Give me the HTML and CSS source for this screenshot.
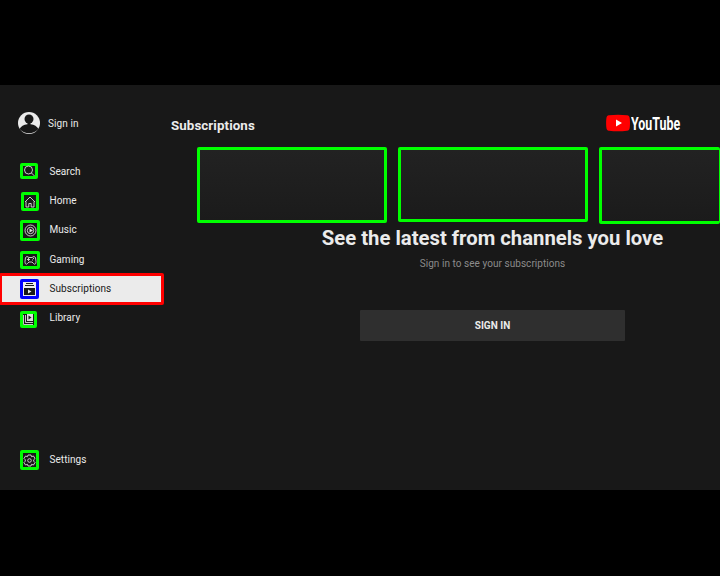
FILE: index.html
```html
<!DOCTYPE html>
<html lang="en">
<head>
<meta charset="utf-8">
<title>Subscriptions</title>
<link rel="stylesheet" href="styles.css">
</head>
<body>
<div class="app">
  <aside class="sidebar">
    <div class="account">
      <svg class="avatar" viewBox="0 0 22 22"><circle cx="11" cy="11" r="11" fill="#ebebeb"/><circle cx="11" cy="7" r="4.500" fill="#181818"/><path d="M9.500 10h3v2.300c4 .2 6.500 2.500 8 4.700C17.500 20 14.500 21.300 11 21.300S4.500 20 1.500 17c1.500-2.200 4-4.500 8-4.700z" fill="#181818"/></svg>
      <span>Sign in</span>
    </div>
    <nav class="nav">
      <div class="item"><span class="mark search"><svg width="12" height="12" viewBox="0 0 12 12"><circle cx="5.500" cy="5" r="4"/><path d="M8.500 8l3 3"/></svg></span><span>Search</span></div>
      <div class="item"><span class="mark home"><svg width="12" height="12" viewBox="0 0 12 12"><path d="M1 6l5-5 5 5M2 5.500V11h2.800V7.500h2.400V11H10V5.500"/></svg></span><span>Home</span></div>
      <div class="item tall"><span class="mark music"><svg width="13" height="13" viewBox="0 0 13 13"><circle cx="6.500" cy="6.500" r="5.500"/><circle cx="6.500" cy="6.500" r="3.200"/><path class="solid" d="M5.500 4.500L9 6.500l-3.500 2z"/></svg></span><span>Music</span></div>
      <div class="item"><span class="mark gaming"><svg width="13" height="11" viewBox="0 0 13 11"><path d="M3 1.500l2 1h3l2-1 1.500 1 .5 4c0 3-1.500 3.500-3 1.500L8 7H5L4 8C2.500 10 1 9.500 1 6.500l.5-4zM3 4.500h3M4.500 3v3M8 5h1M9 3.500h1"/></svg></span><span>Gaming</span></div>
      <div class="item active"><span class="mark subs"><svg width="13" height="14" viewBox="0 0 13 14"><path class="solid" d="M3 1h7v1H3zM2 3h9v1H2zM1 6h11v7H1z"/><path fill="#ebebeb" stroke="none" d="M5 7.500l3.500 2-3.500 2z"/></svg></span><span>Subscriptions</span></div>
      <div class="item tall"><span class="mark library"><svg width="11" height="11" viewBox="0 0 11 11"><path d="M.5 1v9.500H10M2.500 1v7.500H10"/><path class="solid" d="M4 0h6v7H4z"/><path fill="#181818" stroke="none" d="M5.500 1.500l3 2-3 2z"/></svg></span><span>Library</span></div>
    </nav>
    <div class="item settings-row"><span class="mark settings"><svg width="13" height="13" viewBox="0 0 13 13"><path d="M5 1h3l.5 1.700 2-.7 1.500 2.500-1.300 1.300v1.400L12 8.500 10.500 11l-2-.7L8 12H5l-.5-1.700-2 .7L1 8.500l1.300-1.300V5.800L1 4.500 2.500 2l2 .7z"/><circle cx="6.500" cy="6.500" r="1.800"/></svg></span><span>Settings</span></div>
  </aside>
  <main class="content">
    <header class="top">
      <h1>Subscriptions</h1>
      <div class="brand">
        <svg width="24" height="18" viewBox="0 0 24 18"><path d="M3 1.200Q12 .1 21 1.200 23.700 1.500 23.800 5q.4 4 0 8-.1 3.500-2.800 3.800-9 1.100-18 0Q.4 16.500.3 13q-.4-4 0-8Q.4 1.500 3 1.200z" fill="#f00"/><path d="M10 5.500L16 9l-6 3.500z" fill="#fff"/></svg>
        <span class="wordmark">YouTube</span>
      </div>
    </header>
    <div class="shelf">
      <div class="card"></div>
      <div class="card short"></div>
      <div class="card last"></div>
    </div>
    <section class="prompt">
      <h2>See the latest from channels you love</h2>
      <p>Sign in to see your subscriptions</p>
      <button>SIGN IN</button>
    </section>
  </main>
</div>
</body>
</html>
```
FILE: styles.css
```css
* { box-sizing: border-box; }
body { margin: 0; padding-top: 85px; height: 576px; background: #000; overflow: hidden; font-family: Roboto, sans-serif; color: #ebebeb; }
.app { display: flex; width: 720px; height: 405px; background: #181818; overflow: hidden; }
.sidebar { width: 164px; flex: none; }
.account { display: flex; align-items: center; gap: 8px; height: 22px; margin: 27px 0 0 18px; font-size: 10px; letter-spacing: .08px; }
.avatar { width: 22px; height: 22px; }
.nav { margin-top: 23px; }
.item { display: flex; height: 29px; line-height: 30px; font-size: 10px; letter-spacing: .06px; }
.item.tall { height: 30px; }
.item > span:last-child { margin-left: -.5px; }
.mark { flex: none; display: flex; align-items: center; justify-content: center; border: 3px solid #0f0; border-radius: 2px; }
.mark svg { fill: none; stroke: #ddd; stroke-width: .9; flex: none; }
.mark .solid { fill: #ddd; stroke: none; }
.search { width: 18px; height: 16px; margin: 6px 12px 0 20px; }
.home { width: 18px; height: 19px; margin: 6px 11px 0 21px; }
.music { width: 20px; height: 21px; margin: 5px 10px 0 20px; }
.gaming { width: 20px; height: 18px; margin: 6px 10px 0 20px; }
.item.active { height: 32px; margin: -1px 0 -2px -1px; border: 3px solid #f00; border-radius: 2px; background: #ebebeb; color: #181818; line-height: 26px; width: 165px; }
.subs { width: 19px; height: 20px; margin: 3px 11px 0 18px; border-color: #00f; }
.subs .solid { fill: #181818; }
.library { width: 17px; height: 17px; margin: 8px 13px 0 20px; }
.settings-row { margin-top: 112px; }
.settings { width: 19px; height: 20px; margin: 5px 11px 0 20px; }
.content { flex: 1; min-width: 0; }
.top { display: flex; justify-content: space-between; height: 62px; padding: 29px 35px 0 7px; }
h1 { margin: 3px 0 0; font-size: 13.300px; letter-spacing: .1px; line-height: 18px; font-weight: 700; }
.brand { display: flex; gap: 1px; width: 79px; }
.brand svg { display: block; flex: none; }
.wordmark { font-size: 18px; line-height: 19px; font-weight: 700; color: #fff; transform: scaleX(.69); transform-origin: 0 50%; }
.shelf { display: flex; align-items: flex-start; gap: 11px; height: 77px; margin-left: 33px; }
.card { flex: none; width: 190px; height: 76px; border: 3px solid #0f0; border-radius: 2px; background: linear-gradient(#222, #1b1b1b); }
.card.short { height: 75px; }
.card.last { width: 121px; height: 77px; border-right-width: 1px; }
.prompt { display: flex; flex-direction: column; align-items: center; width: 530px; margin-left: 63.500px; }
h2 { margin: 1px 0 0; font-size: 20.300px; line-height: 27px; font-weight: 700; white-space: nowrap; }
p { margin: 5px 0 0; font-size: 10px; line-height: 14px; letter-spacing: .05px; color: #8b8b8b; }
button { width: 265px; height: 31px; margin-top: 39px; padding: 0; border: 0; border-radius: 1px; background: #2f2f2f; color: #ebebeb; font: 700 10px Roboto, sans-serif; }
```
